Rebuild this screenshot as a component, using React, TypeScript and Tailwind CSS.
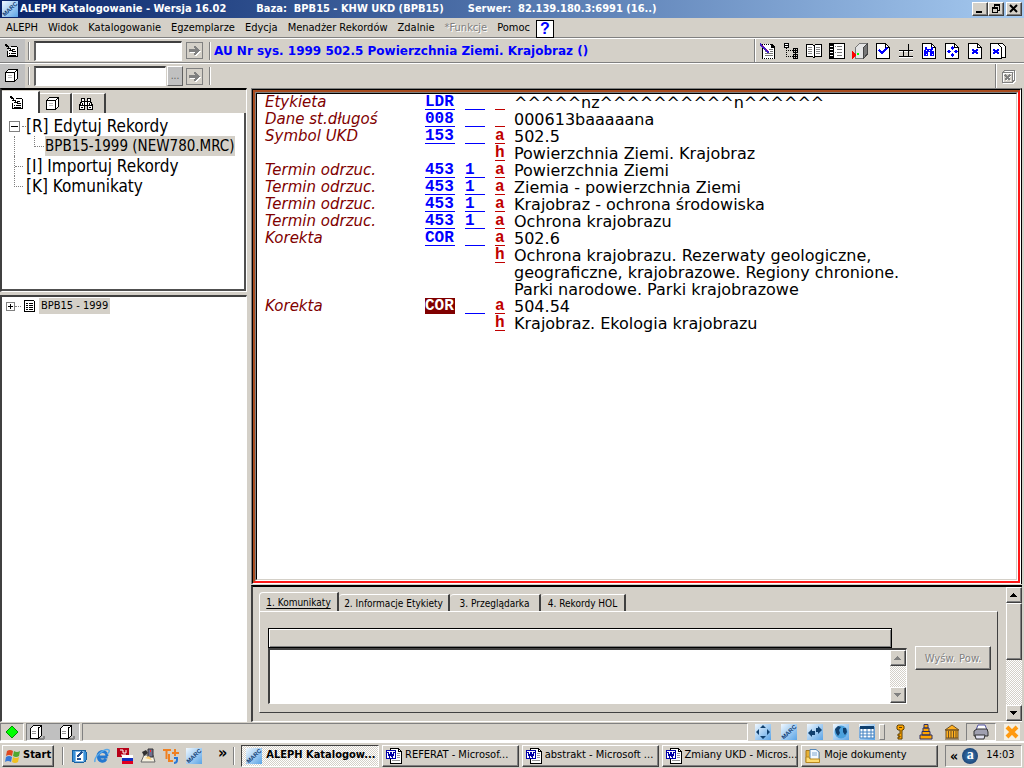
// App.tsx
import type { ReactNode } from 'react';

const raised = 'border border-t-white border-l-white border-r-[#404040] border-b-[#404040] shadow-[inset_-1px_-1px_0_#808080]';
const sunken = 'border border-t-[#808080] border-l-[#808080] border-r-white border-b-white';
const ui = "font-['DejaVu_Sans_Condensed','DejaVu_Sans',sans-serif]";
const dither = 'bg-[repeating-conic-gradient(#ffffff_0_25%,#d4d0c8_0_50%)] bg-[length:2px_2px]';

interface IconProps {
  children: ReactNode;
  size?: string;
}

function Icon({ children, size = 'size-4' }: IconProps) {
  return (
    <svg viewBox="0 0 16 16" className={`${size} shrink-0`} fill="none" stroke="#000" shapeRendering="crispEdges" aria-hidden="true">
      {children}
    </svg>
  );
}

function EditIcon() {
  return (
    <Icon>
      <path d="M7 3.500H12.500L13.500 4.500V13.500H3.500V8" fill="#fff" />
      <path d="M8 6.500H11M9 8.500H12M5 10.500H6M7 10.500H12M5 12.500H12" />
      <path d="M1 1.500H3M2.500 2V4M3 3.500H5M4.500 4V6M5 5.500H7M6.500 6V8M7 7.500H9M8.500 8V9M1 2.500H3M3 5.500H5M5 7.500H7M3.500 2V4" />
    </Icon>
  );
}

function CubeIcon() {
  return (
    <Icon>
      <path d="M1.500 4.500L4.500 1.500H13.500V10.500L10.500 13.500H1.500Z" fill="#fff" />
      <path d="M10.500 5V13M2 4.500H10.500L13.500 1.500" />
      <path d="M4 7.500H8M4 9.500H8" stroke="#bbb" />
    </Icon>
  );
}

function FindIcon() {
  return (
    <Icon>
      <path d="M3.500 2.500H6.500V5.500H9.500V2.500H12.500V5.500L14.500 9.500V13.500H9.500V9.500H6.500V13.500H1.500V9.500L3.500 5.500Z" fill="#fff" />
      <path d="M2 9.500H6M10 9.500H14M3 5.500H13M6.500 5V9M9.500 5V9M4.500 7V9M11.500 7V9M3 11.500H5M11 11.500H13" />
    </Icon>
  );
}

function GoIcon() {
  return (
    <Icon size="size-[17px]">
      <rect x=".5" y=".5" width="15" height="15" stroke="#808080" />
      <path d="M3 8H12M8 4L12 8L8 12" stroke="#fff" strokeWidth="2" transform="translate(1 1)" />
      <path d="M3 8H12M8 4L12 8L8 12" stroke="#808080" strokeWidth="2" />
    </Icon>
  );
}

function Page() {
  return (
    <>
      <path d="M1.500 .5H10.500L14.500 4.500V15.500H1.500Z" fill="#fff" />
      <path d="M10.500 .5V4.500H14.500" />
    </>
  );
}

function MarcIcon() {
  return (
    <svg viewBox="0 0 16 16" className="size-4 shrink-0" aria-hidden="true">
      <defs>
        <linearGradient id="sky" x1="0" y1="0" x2="1" y2="1">
          <stop offset="0" stopColor="#f0f8ff" />
          <stop offset="1" stopColor="#5ba4e6" />
        </linearGradient>
      </defs>
      <rect width="16" height="16" fill="url(#sky)" />
      <text x="8" y="10" fontSize="6" fontWeight="bold" fill="#103a70" textAnchor="middle" transform="rotate(-42 8 8)" fontFamily="Liberation Sans, sans-serif">
        MARC
      </text>
    </svg>
  );
}

function SkyIcon({ children }: { children: ReactNode }) {
  return (
    <svg viewBox="0 0 16 16" className="size-4 shrink-0" fill="#10406f" aria-hidden="true">
      <rect width="16" height="16" fill="url(#sky)" />
      {children}
    </svg>
  );
}

function WordIcon() {
  return (
    <Icon>
      <path d="M4.500 .5H12.500L15.500 3.500V15.500H4.500Z" fill="#fff" />
      <path d="M12.500 1V3.500H15.500" />
      <path d="M11 5.500H14M11 7.500H14M6 12.500H14M11 9.500H14" stroke="#999" />
      <rect x=".5" y="2.500" width="9" height="8" fill="#fff" stroke="#0000a8" />
      <path d="M2 4L3.500 9L5 5L6.500 9L8 4" stroke="#0000a8" strokeWidth="1.500" />
    </Icon>
  );
}

function FolderIcon() {
  return (
    <svg viewBox="0 0 16 16" className="size-4 shrink-0" aria-hidden="true">
      <path d="M1 2.500H6L7 4H14V14.500H1Z" fill="#e8b030" stroke="#a87818" />
      <path d="M5 1.500H11L14 4V12H5Z" fill="#f4faff" stroke="#5888b8" />
      <path d="M7 5H12M7 7H12" stroke="#80a8d0" />
      <path d="M1 9H4L5 11H14.500V14.500H1Z" fill="#ffdc70" stroke="#b88820" />
    </svg>
  );
}

const toolbarIcons = [
  {
    label: 'Edytuj rekord',
    icon: (
      <>
        <path d="M2.500 1.500H11.500L14.500 4.500V15.500H2.500Z" fill="#fff" />
        <path d="M11 1H12L15 4V5H11Z" fill="#000" stroke="none" />
        <path d="M3 1.500H11M3 15.500H14" stroke="#fff" strokeDasharray="1 1" />
        <path d="M9 6.500H13M5 8.500H7M10 8.500H13M5 10.500H13M5 12.500H13" stroke="#777" />
        <path d="M0 1L9 10" stroke="#4020c0" strokeWidth="2" />
        <path d="M2 2L4 4M6 6L8 8" stroke="#a00080" />
      </>
    ),
  },
  {
    label: 'Drzewo',
    icon: (
      <>
        <rect x="1.500" y=".5" width="4" height="4" fill="#fff" />
        <path d="M2 2.500H5" />
        <path d="M3.500 5V14M3 7.500H10M3 13.500H10" strokeDasharray="1 1" />
        <path d="M10.500 5.500H14.500V9.500H10.500ZM10.500 11.500H14.500V15.500H10.500ZM12.500 5V16M10 7.500H15M10 13.500H15" />
      </>
    ),
  },
  {
    label: 'Widok pełny',
    icon: (
      <>
        <path d="M.5 1.500H6.500L8 3L9.500 1.500H15.500V13.500H9.500L8 15L6.500 13.500H.5Z" fill="#fff" />
        <path d="M8.500 3V15" />
        <path d="M2 4.500H6M2 6.500H6M2 8.500H6M2 10.500H6M10 4.500H14M10 6.500H14M10 8.500H14M10 10.500H14" stroke="#888" />
      </>
    ),
  },
  {
    label: 'Indeks',
    icon: (
      <>
        <rect x=".5" y=".5" width="15" height="15" fill="#fff" />
        <path d="M4.500 1V15" />
        <path d="M2.500 1V15" strokeWidth="3" strokeDasharray="2 1" />
        <path d="M6 3.500H7M8 3.500H13M8 6.500H13M6 9.500H7M8 9.500H13M8 12.500H13" stroke="#777" />
      </>
    ),
  },
  {
    label: 'Wyślij na serwer',
    icon: (
      <>
        <path d="M3.500 4.500L7.500 .5H15.500V11L11.500 15.500H3.500Z" fill="#e4e4e4" stroke="#777" />
        <path d="M11.500 4.500L15.500 .5V11L11.500 15.500Z" fill="#777" stroke="#444" />
        <path d="M0 8L5 12L0 16Z" fill="#f00" stroke="none" />
        <path d="M5 10H7V12H5Z" fill="#0f0" stroke="none" />
      </>
    ),
  },
  {
    label: 'Sprawdź rekord',
    icon: (
      <>
        <Page />
        <path d="M4 7L7 10L12 5" stroke="#00f" strokeWidth="2" />
      </>
    ),
  },
  {
    label: 'Podziel ekran',
    icon: (
      <>
        <path d="M1 8.500H5M12 8.500H15M1 14.500H15M6 8.500H11" stroke="#fff" />
        <path d="M10.500 1V7M5.500 7V13M10.500 7V13M1 7.500H15M1 13.500H15" />
      </>
    ),
  },
  {
    label: 'Szukaj',
    icon: (
      <>
        <Page />
        <path d="M4 4H6V6H10V4H12V6L13 9V13H9V9H7V13H3V9L4 6Z" fill="#00f" stroke="none" />
        <path d="M5.500 7V8M11.500 7V8M5 11.500H6M11 11.500H12M8 7.500H9" stroke="#fff" />
      </>
    ),
  },
  {
    label: 'Nawigacja',
    icon: (
      <>
        <Page />
        <path d="M8 3L10 5L8 7L6 5ZM8 10L10 12L8 14L6 12ZM4.500 6.500L6.500 8.500L4.500 10.500L2.500 8.500ZM11.500 6.500L13.500 8.500L11.500 10.500L9.500 8.500Z" fill="#00f" stroke="none" />
      </>
    ),
  },
  {
    label: 'Zamknij rekord',
    icon: (
      <>
        <Page />
        <path d="M5 6H7V7H9V6H11V8H10V9H11V11H9V10H7V11H5V9H6V8H5Z" fill="#00f" stroke="none" />
      </>
    ),
  },
  {
    label: 'Zamknij wszystkie',
    icon: (
      <>
        <path d="M5 .5H12.500L15.500 3.500V14.500H5" fill="#fff" />
        <path d="M.5 .5H7.500L11.500 4.500V15.500H.5Z" fill="#fff" />
        <path d="M3 6H5V7H7V6H9V8H8V9H9V11H7V10H5V11H3V9H4V8H3Z" fill="#00f" stroke="none" />
      </>
    ),
  },
];

const menuItems = ['ALEPH', 'Widok', 'Katalogowanie', 'Egzemplarze', 'Edycja', 'Menadżer Rekordów', 'Zdalnie', '*Funkcje', 'Pomoc'];

interface Field {
  name?: string;
  tag?: string;
  ind?: string;
  sub: string;
  value: string[];
  active?: boolean;
}

const fields: Field[] = [
  { name: 'Etykieta', tag: 'LDR', sub: '', value: ['^^^^^nz^^^^^^^^^^n^^^^^^'] },
  { name: 'Dane st.długoś', tag: '008', sub: '', value: ['000613baaaaana'] },
  { name: 'Symbol UKD', tag: '153', sub: 'a', value: ['502.5'] },
  { sub: 'h', value: ['Powierzchnia Ziemi. Krajobraz'] },
  { name: 'Termin odrzuc.', tag: '453', ind: '1', sub: 'a', value: ['Powierzchnia Ziemi'] },
  { name: 'Termin odrzuc.', tag: '453', ind: '1', sub: 'a', value: ['Ziemia - powierzchnia Ziemi'] },
  { name: 'Termin odrzuc.', tag: '453', ind: '1', sub: 'a', value: ['Krajobraz - ochrona środowiska'] },
  { name: 'Termin odrzuc.', tag: '453', ind: '1', sub: 'a', value: ['Ochrona krajobrazu'] },
  { name: 'Korekta', tag: 'COR', sub: 'a', value: ['502.6'] },
  {
    sub: 'h',
    value: ['Ochrona krajobrazu. Rezerwaty geologiczne,', 'geograficzne, krajobrazowe. Regiony chronione.', 'Parki narodowe. Parki krajobrazowe'],
  },
  { name: 'Korekta', tag: 'COR', sub: 'a', value: ['504.54'], active: true },
  { sub: 'h', value: ['Krajobraz. Ekologia krajobrazu'] },
];

function TitleBar() {
  return (
    <header className="flex h-[18px] items-center bg-linear-to-r from-[#0a246a] to-[#a6caf0] px-0.5 text-[11px] font-bold text-white">
      <MarcIcon />
      <h1 className="ml-0.5 whitespace-pre">ALEPH Katalogowanie - Wersja 16.02</h1>
      <span className="ml-[30px]">Baza:&nbsp; BPB15 - KHW UKD (BPB15)</span>
      <span className="ml-6">Serwer:&nbsp; 82.139.180.3:6991 (16..)</span>
      <div className="ml-auto flex">
        <button aria-label="Minimalizuj" className={`h-3.5 w-4 bg-[#d4d0c8] ${raised}`}>
          <svg viewBox="0 0 14 12" className="block h-3 w-3.5"><path d="M3 8H9V10H3Z" /></svg>
        </button>
        <button aria-label="Przywróć" className={`h-3.5 w-4 bg-[#d4d0c8] ${raised}`}>
          <svg viewBox="0 0 14 12" className="block h-3 w-3.5" fill="none" stroke="#000" shapeRendering="crispEdges">
            <path d="M5 2H11M5.500 2V4M10.500 2V7H9M3 5H9M3.500 5V9.500H8.500V5" />
            <path d="M5 1.500H11M3 4.500H9" />
          </svg>
        </button>
        <button aria-label="Zamknij" className={`ml-0.5 h-3.5 w-4 bg-[#d4d0c8] ${raised}`}>
          <svg viewBox="0 0 14 12" className="block h-3 w-3.5" stroke="#000" strokeWidth="2"><path d="M3 2L10 9M10 2L3 9" /></svg>
        </button>
      </div>
    </header>
  );
}

function MenuBar() {
  return (
    <nav className="flex h-5 items-center gap-2.5 border-b border-[#808080] pt-0.5 pl-1.5 text-[11px]">
      {menuItems.map((item) => (
        <button key={item} disabled={item === '*Funkcje'} className="whitespace-nowrap disabled:text-[#808080] disabled:[text-shadow:1px_1px_0_#fff]">
          {item}
        </button>
      ))}
      <button aria-label="Pomoc kontekstowa" className="-ml-1 flex h-[18px] w-[18px] items-center justify-center border border-black bg-white font-['Liberation_Sans',sans-serif] text-base font-bold text-[#0000ff]">
        ?
      </button>
    </nav>
  );
}

function Separator() {
  return <div className="h-[18px] w-0.5 border-l border-[#808080] bg-white" />;
}

function Toolbars() {
  return (
    <>
      <div className="flex h-[25px] items-center border-t border-b border-t-white border-b-[#808080]">
        <label htmlFor="record" className="flex h-full w-[25px] items-center bg-[#c0c0c0] pl-1"><EditIcon /></label>
        <div className="ml-[3px]"><Separator /></div>
        <input id="record" className="ml-1 h-5 w-[148px] border-t-2 border-l-2 border-r border-b border-t-[#404040] border-l-[#606060] border-r-white border-b-white bg-white px-1" />
        <button aria-label="Otwórz rekord" className="ml-1"><GoIcon /></button>
        <div className="ml-1.5"><Separator /></div>
        <p className="ml-[3px] flex-1 whitespace-nowrap font-['DejaVu_Sans',sans-serif] text-xs font-bold text-[#0000ff]">
          AU Nr sys. 1999 502.5 Powierzchnia Ziemi. Krajobraz ()
        </p>
        <div className="flex h-full items-center gap-[7px] border-l border-[#808080] pr-[18px] pl-[5px] shadow-[inset_1px_0_0_#fff]">
          {toolbarIcons.map((item) => (
            <button key={item.label} aria-label={item.label}><Icon>{item.icon}</Icon></button>
          ))}
        </div>
      </div>
      <div className="flex h-[25px] items-center border-t border-white">
        <label htmlFor="item" className="flex h-full w-[25px] items-center bg-[#c0c0c0] pl-1"><CubeIcon /></label>
        <div className="ml-[3px]"><Separator /></div>
        <input id="item" className="ml-1 h-5 w-[132px] border-t-2 border-l-2 border-r border-b border-t-[#404040] border-l-[#606060] border-r-white border-b-white bg-white px-1" />
        <button aria-label="Lista" className="ml-px h-5 w-4 border border-t-white border-l-white border-r-[#606060] border-b-[#606060] bg-[#c0c0c0] text-[10px] leading-3 text-[#606060]">...</button>
        <button aria-label="Otwórz egzemplarz" className="ml-[3px]"><GoIcon /></button>
        <div className="ml-1.5"><Separator /></div>
        <div className="ml-auto flex h-full items-center border-l border-[#808080] pr-2 pl-1 shadow-[inset_1px_0_0_#fff]">
          <button aria-label="Zamknij egzemplarz">
            <Icon>
              <path d="M2.500 4.500L4.500 2.500H14.500V12L12.500 14.500H2.500ZM12.500 4V14M3 4.500H12M5 7L10 12M10 7L5 12" stroke="#fff" transform="translate(1 1)" />
              <path d="M2.500 4.500L4.500 2.500H14.500V12L12.500 14.500H2.500ZM12.500 4V14M3 4.500H12" stroke="#808080" />
              <path d="M5 7L10 12M10 7L5 12" stroke="#808080" strokeWidth="2" />
            </Icon>
          </button>
        </div>
      </div>
    </>
  );
}

function Sidebar() {
  return (
    <aside className="flex w-[247px] shrink-0 flex-col gap-[3px]">
      <section className="flex h-[204px] flex-col border-t-2 border-l-2 border-r border-b border-t-black border-l-[#404040] border-r-white border-b-white">
        <div role="tablist" className="flex h-[23px] items-end pt-px">
          <button role="tab" aria-selected="true" aria-label="Rekordy" className="h-full w-[38px] border-t border-r-2 border-t-white border-r-[#404040] bg-white pl-[7px]"><EditIcon /></button>
          <button role="tab" aria-label="Egzemplarze" className="h-5 w-8 border-t border-r-2 border-t-white border-r-[#404040] pl-[5px]"><CubeIcon /></button>
          <button role="tab" aria-label="Szukaj" className="h-5 w-[34px] border-t border-l border-r-2 border-t-white border-l-white border-r-[#404040] pl-[5px]"><FindIcon /></button>
        </div>
        <div className="flex-1 border-r-2 border-b-2 border-[#505050] bg-white pt-[3px] pl-[7px]">
          <ul className="text-[17px] leading-5 whitespace-nowrap">
            <li>
              <div className="flex items-center">
                <button aria-label="Zwiń" className="flex size-[11px] items-center justify-center border border-[#808080]">
                  <span className="h-px w-[7px] bg-black" />
                </button>
                <span className="ml-0.5 w-1 border-t border-dotted border-[#808080]" />
                [R] Edytuj Rekordy
              </div>
              <ul className="ml-[5px] border-l border-dotted border-[#808080] pl-[19px]">
                <li className="flex">
                  <span className="mr-px h-[11px] w-2.5 border-b border-l border-dotted border-[#808080]" />
                  <span className="bg-[#d4d0c8] text-[15px]">BPB15-1999 (NEW780.MRC)</span>
                </li>
              </ul>
            </li>
            <li className="ml-[5px] flex items-center border-l border-dotted border-[#808080]">
              <span className="mr-[3px] w-2 border-t border-dotted border-[#808080]" />[I] Importuj Rekordy
            </li>
            <li className="ml-[5px] flex">
              <span className="mr-[3px] h-[11px] w-[9px] border-b border-l border-dotted border-[#808080]" />[K] Komunikaty
            </li>
          </ul>
        </div>
      </section>
      <section className="flex-1 border-t-2 border-l-2 border-r border-b border-t-[#404040] border-l-[#404040] border-r-white border-b-white bg-white pt-px pl-1">
        <div className="flex items-center text-[11px]">
          <button aria-label="Rozwiń" className="size-[9px] border border-[#808080] bg-[linear-gradient(#000,#000),linear-gradient(#000,#000)] bg-[length:5px_1px,1px_5px] bg-center bg-no-repeat" />
          <span className="w-1.5 border-t border-dotted border-[#808080]" />
          <Icon>
            <path d="M3.500 2.500H12.500L13.500 3.500V13.500H3.500Z" fill="#fff" />
            <path d="M5 5.500H7M5 7.500H7M5 9.500H7M5 11.500H7M8 5.500H12M8 7.500H12M8 9.500H12M8 11.500H12" />
          </Icon>
          <span className="ml-0.5 bg-[#d4d0c8] px-0.5 leading-4">BPB15 - 1999</span>
        </div>
      </section>
    </aside>
  );
}

function RecordEditor() {
  return (
    <section className="flex-1 border border-b-0 border-[#808080] border-r-black">
      <div className="h-full border border-black border-r-white border-b-white">
        <div className="h-full border-2 border-t-[#a84c20] border-r-[#ff1818] border-b-[#ff1818] border-l-[#a84c20]">
          <div className="h-full border border-t-[#808080] border-r-white border-b-white border-l-[#808080]">
            <div className="h-full border border-t-black border-r-[#d4d0c8] border-b-[#d4d0c8] border-l-black bg-white pl-2">
              <table className="border-collapse font-['DejaVu_Sans',sans-serif] text-base leading-[17px]">
                <tbody>
                  {fields.map((field, i) => (
                    <tr key={i} className="align-top whitespace-nowrap">
                      <th scope="row" className="w-40 p-0 text-left text-[15px] leading-[17px] font-normal text-[#800000] italic">{field.name}</th>
                      <td className="w-10 p-0 font-['Liberation_Mono',monospace] text-base leading-4 font-bold text-[#0000ff]">
                        {field.tag && (
                          <span className={`block h-4 w-[30px] border-b ${field.active ? 'border-[#800000] bg-[#800000] text-white' : 'border-[#0000ff]'}`}>
                            {field.tag}
                          </span>
                        )}
                      </td>
                      <td className="w-[30px] p-0 font-['Liberation_Mono',monospace] text-base leading-4 font-bold text-[#0000ff]">
                        {field.tag && <span className="block h-4 w-5 border-b border-[#0000ff]">{field.ind}</span>}
                      </td>
                      <td className="w-[19px] p-0 font-['Liberation_Mono',monospace] text-base leading-4 font-bold text-[#c00000]">
                        <span className="block h-4 w-2.5 border-b border-[#c00000]">{field.sub}</span>
                      </td>
                      <td className="p-0">
                        {field.value.map((line) => (
                          <div key={line}>{line}</div>
                        ))}
                      </td>
                    </tr>
                  ))}
                </tbody>
              </table>
            </div>
          </div>
        </div>
      </div>
    </section>
  );
}

function Arrow({ down = false, disabled = false }: { down?: boolean; disabled?: boolean }) {
  return (
    <button aria-label={down ? 'W dół' : 'W górę'} disabled={disabled} className={`size-4 shrink-0 bg-[#d4d0c8] text-black disabled:text-[#808080] ${raised}`}>
      <svg viewBox="0 0 14 14" className="block size-3.5" fill="currentColor" shapeRendering="crispEdges">
        {down ? <path d="M3 5H10L6.500 9Z" /> : <path d="M3 9H10L6.500 5Z" />}
      </svg>
    </button>
  );
}

const tabs = [
  { label: '2. Informacje Etykiety', className: 'w-[111px]' },
  { label: '3. Przeglądarka', className: 'w-[91px]' },
  { label: '4. Rekordy HOL', className: 'w-[85px]' },
];

function MessagePanel() {
  return (
    <section className="flex h-[137px] border-t-2 border-l-2 border-b border-t-black border-l-[#404040] border-b-white text-[10px]">
      <div className="flex flex-1 flex-col pt-[5px] pr-2 pb-2 pl-1.5">
        <div role="tablist" className="flex h-5 items-end">
          <button role="tab" aria-selected="true" className="h-5 w-20 rounded-tl border-t border-l border-r-2 border-t-white border-l-white border-r-[#404040] underline underline-offset-2">
            1. Komunikaty
          </button>
          {tabs.map((tab) => (
            <button key={tab.label} role="tab" className={`h-[18px] rounded-tl border-t border-r-2 border-t-white border-r-[#404040] whitespace-nowrap ${tab.className}`}>
              {tab.label}
            </button>
          ))}
        </div>
        <div className="-mt-px flex flex-1 items-start border border-t-white border-r-[#404040] border-b-[#404040] border-l-white pt-4 pr-1.5 pl-2">
          <div className="flex-1">
            <div className="mr-[15px] h-5 border border-black shadow-[inset_1px_1px_0_#fff,inset_-1px_-1px_0_#808080]" />
            <div className="flex h-14 border-t-2 border-l-2 border-r border-b border-t-[#404040] border-l-[#404040] border-r-white border-b-white bg-white">
              <textarea aria-label="Komunikaty" className="flex-1 resize-none" />
              <div className={`flex flex-col justify-between ${dither}`}>
                <Arrow disabled />
                <Arrow down disabled />
              </div>
            </div>
          </div>
          <button disabled className={`mt-[18px] ml-2 h-6 w-[76px] font-['DejaVu_Sans',sans-serif] text-[#808080] [text-shadow:1px_1px_0_#fff] ${raised}`}>
            Wyśw. Pow.
          </button>
        </div>
      </div>
      <div className={`flex w-4 flex-col ${dither}`}>
        <Arrow />
        <div className={`h-[57px] bg-[#d4d0c8] ${raised}`} />
        <div className="flex-1" />
        <Arrow down />
      </div>
    </section>
  );
}

function ServerIcon() {
  return (
    <Icon>
      <path d="M7 15H14L16 12" stroke="#888" strokeWidth="2" />
      <path d="M1.500 4.500L4.500 1.500H12.500V11.500L9.500 14.500H1.500Z" fill="#fff" />
      <path d="M9.500 5V14M9 4.500L12 2" />
      <path d="M3 7.500H7M3 9.500H7" stroke="#999" />
    </Icon>
  );
}

function StatusBar() {
  return (
    <footer className="flex h-5 items-center gap-0.5 border-b border-white">
      <div className={`flex h-[18px] w-6 items-center justify-center ${sunken}`}>
        <Icon size="size-3.5"><path d="M8 1L15 8L8 15L1 8Z" fill="#00ff00" stroke="#008000" /></Icon>
      </div>
      <div className={`flex h-[18px] w-[54px] items-center gap-3.5 bg-[#c0c0c0] pl-0.5 ${sunken}`}>
        <ServerIcon />
        <ServerIcon />
      </div>
      <div className={`h-[18px] flex-1 ${sunken}`} />
      <div className="flex items-center gap-2.5 pr-0.5 pl-[5px]">
        <SkyIcon><path d="M8 1L11 4H5ZM8 15L11 12H5ZM1 8L4 5V11ZM15 8L12 5V11Z" /></SkyIcon>
        <MarcIcon />
        <SkyIcon><path d="M1 9L5 5V7H8V11H5V13ZM15 6L11 2V4H9V8H11V10Z" /></SkyIcon>
        <SkyIcon>
          <circle cx="8" cy="8" r="6.500" fill="#4aa0dc" />
          <path d="M2 5L5 2L8 3L6 6L7 9L5 12L3 9ZM10 4L13 4L14 8L12 11L10 8Z" />
        </SkyIcon>
        <SkyIcon>
          <path d="M1 3H15V14H1Z" fill="#fff" stroke="#4080c0" />
          <path d="M1 2H15V5H1Z" />
          <path d="M1 8H15M1 11H15M4 5V14M8 5V14M12 5V14" stroke="#4080c0" />
        </SkyIcon>
      </div>
      <div className="h-4 w-1.5 border border-t-white border-l-white border-r-[#808080] border-b-[#808080]" />
      <div className="flex items-center gap-2.5 pl-[5px]">
        <svg viewBox="0 0 16 16" className="size-4" fill="none" stroke="#604000">
          <path d="M6 1H11L12 2V5L11 6H10V15H6V13H8V12H6V10H8V6H6L5 5V2Z" fill="#ffa500" />
          <path d="M7 3.500H10" />
        </svg>
        <svg viewBox="0 0 16 16" className="size-4" fill="#ffa500" stroke="#303060"><path d="M6 .5H10V4H6ZM5 4H11V7.500H5ZM4 7.500H12V11H4ZM2 11H14V15H2Z" /></svg>
        <svg viewBox="0 0 16 16" className="size-4" fill="#ffb020" stroke="#705020"><path d="M8 1L15 6H1ZM2 6H14V14H2ZM1 15H15" /><path d="M4.500 7V14M7 7V14M9.500 7V14M12 7V14" /></svg>
      </div>
      <div className={`ml-1 flex h-[18px] w-[30px] items-center justify-center ${sunken}`}>
        <svg viewBox="0 0 16 16" className="size-4">
          <path d="M5 1H12L14 6H3Z" fill="#fff" stroke="#5050a0" />
          <path d="M1 7L4 5H14L15 8V12H1Z" fill="#a0a0b0" stroke="#333" />
          <path d="M2 11H12L11 15H3Z" fill="#e0e0f0" stroke="#333" />
        </svg>
      </div>
      <button aria-label="Zamknij" className="mr-1 ml-1.5 flex size-4 items-center justify-center bg-[#f4f0e4]">
        <svg viewBox="0 0 16 16" className="size-4" stroke="#ff9a10" strokeWidth="4"><path d="M3 3L13 13M13 3L3 13" /></svg>
      </button>
    </footer>
  );
}

const tasks = [
  { label: 'REFERAT - Microsof...', icon: <WordIcon /> },
  { label: 'abstrakt - Microsoft ...', icon: <WordIcon /> },
  { label: 'Zmiany UKD - Micros...', icon: <WordIcon /> },
  { label: 'Moje dokumenty', icon: <FolderIcon /> },
];

function Taskbar() {
  return (
    <div className="flex h-[26px] items-center border-t border-white px-0.5 text-[11px]">
      <button className={`flex h-[22px] w-[52px] items-center gap-0.5 pl-0.5 font-bold ${raised}`}>
        <svg viewBox="0 0 16 16" className="size-4 shrink-0">
          <path d="M2 3Q5 1 8 3L7 8Q4 6 1 8Z" fill="#e04820" />
          <path d="M9 3Q12 5 15 3L14 8Q11 10 8 8Z" fill="#50a830" />
          <path d="M1 9Q4 7 7 9L6 14Q3 12 0 14Z" fill="#3878d8" />
          <path d="M8 9Q11 11 14 9L13 14Q10 16 7 14Z" fill="#f0c020" />
        </svg>
        Start
      </button>
      <div className="ml-2"><Separator /></div>
      <div className="ml-[7px] flex items-center gap-[7px]">
        <Icon>
          <rect x="1" y="2" width="14" height="12" rx="2" fill="#3890d8" stroke="#1860a0" />
          <path d="M4 3H12V13H4Z" fill="#fff" stroke="#80b8e8" />
          <path d="M6 9L11 4M6 11H10" stroke="#205090" strokeWidth="2" />
        </Icon>
        <svg viewBox="0 0 16 16" className="size-4" fill="none">
          <path d="M13.500 9H4.500A4 4 0 0 0 12 11M4 8A4.500 4.500 0 0 1 13 8" stroke="#2478d0" strokeWidth="3" />
          <path d="M1 14Q0 10 6 5T15 2Q16 4 13 6" stroke="#58a8e8" strokeWidth="1.500" />
        </svg>
        <svg viewBox="0 0 16 16" className="size-4">
          <path d="M0 0H12V9H0Z" fill="#b80018" />
          <path d="M3 2H6V5H9V2M4 7H9" stroke="#fff" fill="none" />
          <path d="M5 7H16V10H5Z" fill="#fff" /><path d="M5 10H16V13H5Z" fill="#1030c0" /><path d="M5 13H16V16H5Z" fill="#e00020" />
        </svg>
        <svg viewBox="0 0 16 16" className="size-4">
          <path d="M1 14L4 7H13L15 14Z" fill="#f4f0e0" stroke="#666" />
          <path d="M2 4L6 2L8 5L4 8Z" fill="#303030" /><path d="M8 1H13V9H8Z" fill="#707090" stroke="#333" /><path d="M10 2H11V4H10Z" fill="#f22" />
          <path d="M5 10L9 8L12 12" fill="#ffcf70" />
        </svg>
        <svg viewBox="0 0 16 16" className="size-4" fill="none" strokeWidth="2">
          <path d="M0 2H8M3.500 2V11M6 6V13H10M12 1V8M9 5H16" stroke="#f08020" /><path d="M11 10H14V12Q14 15 11 15" stroke="#2878d8" />
        </svg>
        <MarcIcon />
      </div>
      <span className="ml-4 pb-1.5 text-base leading-4 font-bold">»</span>
      <div className="ml-1.5"><Separator /></div>
      <div className="ml-1.5 flex flex-1 gap-[3px]">
        <button className={`flex h-[22px] w-0 flex-1 items-center gap-1 border border-t-[#404040] border-l-[#404040] border-r-white border-b-white pl-1 font-bold whitespace-nowrap ${dither}`}>
          <MarcIcon />ALEPH Katalogow...
        </button>
        {tasks.map((task) => (
          <button key={task.label} className={`flex h-[22px] w-0 flex-1 items-center gap-[3px] pl-[3px] whitespace-nowrap ${raised}`}>
            {task.icon}{task.label}
          </button>
        ))}
      </div>
      <div className={`ml-[7px] flex h-[22px] w-[77px] items-center gap-1 pl-1 ${sunken}`}>
        <span className="text-sm leading-4 font-bold">«</span>
        <span className="flex size-4 items-center justify-center rounded-full bg-radial from-[#4080b8] to-[#103060] pb-0.5 font-['Liberation_Serif',serif] text-sm leading-4 font-bold text-white">a</span>
        <time className="ml-1">14:03</time>
      </div>
    </div>
  );
}

export default function App() {
  return (
    <div className={`flex min-h-screen flex-col bg-[#d4d0c8] text-black ${ui}`}>
      <TitleBar />
      <MenuBar />
      <Toolbars />
      <main className="flex flex-1 gap-1 pr-0.5">
        <Sidebar />
        <div className="flex flex-1 flex-col gap-px">
          <RecordEditor />
          <MessagePanel />
        </div>
      </main>
      <StatusBar />
      <Taskbar />
    </div>
  );
}
